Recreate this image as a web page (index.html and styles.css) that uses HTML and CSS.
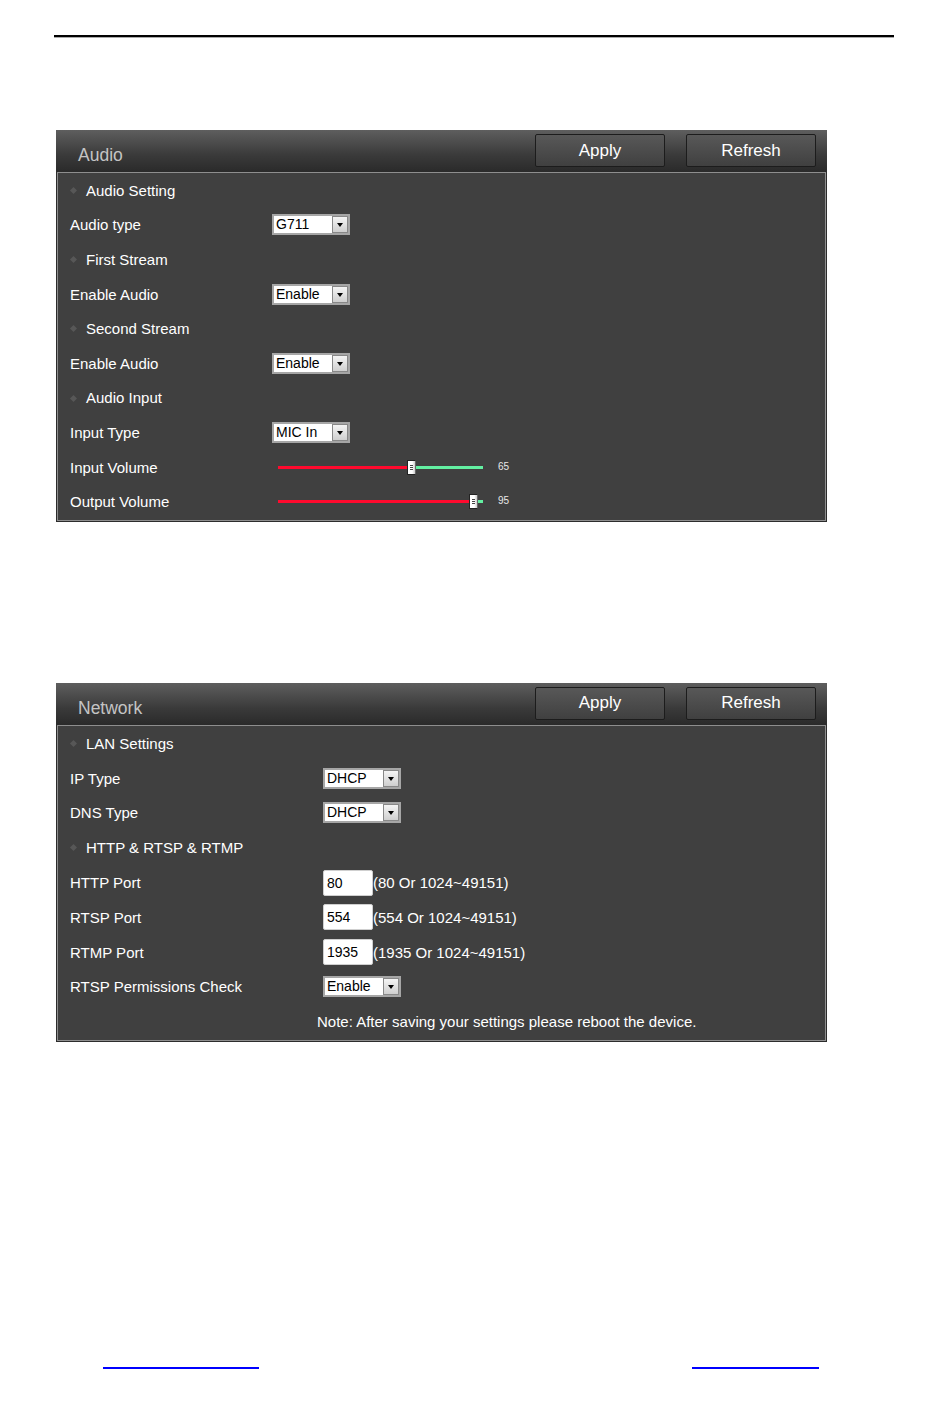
FILE: index.html
```html
<!DOCTYPE html>
<html lang="en">

<head>
    <meta charset="UTF-8">
    <title>Audio / Network Settings</title>
    <link rel="stylesheet" href="styles.css">
</head>

<body>
    <div class="page-rule"></div>

    <section class="panel audio-panel">
        <div class="panel-head">
            <span class="panel-title">Audio</span>
            <div class="panel-buttons">
                <button class="btn">Apply</button>
                <button class="btn">Refresh</button>
            </div>
        </div>
        <div class="panel-body">
            <div class="row section"><span class="dot"></span>Audio Setting</div>
            <div class="row">
                <span class="label">Audio type</span>
                <span class="select"><span class="select-text">G711</span><span class="select-arrow"></span></span>
            </div>
            <div class="row section"><span class="dot"></span>First Stream</div>
            <div class="row">
                <span class="label">Enable Audio</span>
                <span class="select"><span class="select-text">Enable</span><span class="select-arrow"></span></span>
            </div>
            <div class="row section"><span class="dot"></span>Second Stream</div>
            <div class="row">
                <span class="label">Enable Audio</span>
                <span class="select"><span class="select-text">Enable</span><span class="select-arrow"></span></span>
            </div>
            <div class="row section"><span class="dot"></span>Audio Input</div>
            <div class="row">
                <span class="label">Input Type</span>
                <span class="select"><span class="select-text">MIC In</span><span class="select-arrow"></span></span>
            </div>
            <div class="row">
                <span class="label">Input Volume</span>
                <span class="slider">
                    <span class="track">
                        <span class="track-fill" style="width: 65%;"></span>
                        <span class="thumb" style="left: 65%;"></span>
                    </span>
                    <span class="slider-value">65</span>
                </span>
            </div>
            <div class="row">
                <span class="label">Output Volume</span>
                <span class="slider">
                    <span class="track">
                        <span class="track-fill" style="width: 95%;"></span>
                        <span class="thumb" style="left: 95%;"></span>
                    </span>
                    <span class="slider-value">95</span>
                </span>
            </div>
        </div>
    </section>

    <section class="panel network-panel">
        <div class="panel-head">
            <span class="panel-title">Network</span>
            <div class="panel-buttons">
                <button class="btn">Apply</button>
                <button class="btn">Refresh</button>
            </div>
        </div>
        <div class="panel-body wide">
            <div class="row section"><span class="dot"></span>LAN Settings</div>
            <div class="row">
                <span class="label">IP Type</span>
                <span class="select"><span class="select-text">DHCP</span><span class="select-arrow"></span></span>
            </div>
            <div class="row">
                <span class="label">DNS Type</span>
                <span class="select"><span class="select-text">DHCP</span><span class="select-arrow"></span></span>
            </div>
            <div class="row section"><span class="dot"></span>HTTP &amp; RTSP &amp; RTMP</div>
            <div class="row">
                <span class="label">HTTP Port</span>
                <span class="text-input">80</span><span class="hint">(80 Or 1024~49151)</span>
            </div>
            <div class="row">
                <span class="label">RTSP Port</span>
                <span class="text-input">554</span><span class="hint">(554 Or 1024~49151)</span>
            </div>
            <div class="row">
                <span class="label">RTMP Port</span>
                <span class="text-input">1935</span><span class="hint">(1935 Or 1024~49151)</span>
            </div>
            <div class="row">
                <span class="label">RTSP Permissions Check</span>
                <span class="select"><span class="select-text">Enable</span><span class="select-arrow"></span></span>
            </div>
            <div class="row note">Note: After saving your settings please reboot the device.</div>
        </div>
    </section>

    <footer class="page-foot">
        <span class="foot-link left"></span>
        <span class="foot-link right"></span>
    </footer>
</body>

</html>
```

FILE: styles.css
```css
body {
    margin: 0;
    background-color: #fff;
    font-family: 'Liberation Sans', Arial, sans-serif;
    width: 950px;
    height: 1408px;
    overflow: hidden;
}

.page-rule {
    margin: 35px 0 0 54px;
    width: 840px;
    border-top: 2px solid #000;
    box-shadow: 0 1px 0 #aaa;
}

.panel {
    margin-left: 56px;
    width: 771px;
    box-sizing: border-box;
    background-color: #2c2c2c;
    padding: 0 1px 1px 1px;
}

.audio-panel {
    margin-top: 93px;
}

.network-panel {
    margin-top: 161px;
}

.panel-head {
    height: 42px;
    margin: 0 -1px;
    display: flex;
    justify-content: space-between;
    background: linear-gradient(#5e5e5e, #3a3a3a 60%, #2a2a2a);
}

.panel-title {
    color: #c4c4c4;
    font-size: 17.5px;
    padding: 15px 0 0 22px;
}

.panel-buttons {
    display: flex;
    gap: 21px;
    padding: 4px 11px 0 0;
}

.btn {
    width: 130px;
    height: 33px;
    background: linear-gradient(#585858, #404040);
    border: 1px solid #1c1c1c;
    border-radius: 2px;
    color: #fff;
    font-family: 'Liberation Sans', Arial, sans-serif;
    font-size: 17px;
    padding: 0;
}

.panel-body {
    background-color: #404040;
    border: 1px solid #8e8e8e;
    padding: 0 0 1px 12px;
    color: #fff;
    font-size: 15px;
}

.row {
    height: 34.6px;
    display: flex;
    align-items: center;
}

.wide .row {
    height: 34.8px;
}

.section {
    padding-left: 16px;
    position: relative;
}

.dot {
    position: absolute;
    left: 1px;
    top: 15px;
    width: 5px;
    height: 5px;
    background-color: #575757;
    transform: rotate(45deg);
}

.label {
    width: 202px;
    flex-shrink: 0;
}

.wide .label {
    width: 253px;
}

.select {
    display: flex;
    width: 78px;
    height: 21px;
    box-sizing: border-box;
    border: 2px solid #a6a6a6;
    background-color: #fff;
    color: #000;
}

.select-text {
    flex: 1;
    font-size: 14px;
    line-height: 17px;
    padding-left: 2px;
}

.select-arrow {
    width: 16px;
    box-sizing: border-box;
    border: 1px solid #888;
    background: linear-gradient(#f4f4f4, #cfcfcf);
    position: relative;
}

.select-arrow::after {
    content: '';
    position: absolute;
    left: 4px;
    top: 6px;
    border-left: 3.5px solid transparent;
    border-right: 3.5px solid transparent;
    border-top: 4px solid #000;
}

.slider {
    display: flex;
    align-items: center;
    margin-left: 6px;
}

.track {
    position: relative;
    width: 205px;
    height: 3px;
    background-color: #63f0a2;
}

.track-fill {
    position: absolute;
    left: 0;
    top: 0;
    height: 3px;
    background-color: #ff0a2e;
}

.thumb {
    position: absolute;
    top: -6px;
    width: 9px;
    height: 15px;
    margin-left: -4px;
    box-sizing: border-box;
    background: linear-gradient(90deg, #fff 60%, #ccc);
    border: 1px solid #222;
    border-right-color: #666;
    border-radius: 1px;
}

.thumb::after {
    content: '';
    position: absolute;
    left: 2px;
    top: 4px;
    width: 3px;
    height: 5px;
    background: repeating-linear-gradient(#444 0 1px, transparent 1px 2px);
}

.slider-value {
    margin-left: 15px;
    font-size: 10px;
    color: #e8e8e8;
    margin-top: -2px;
}

.text-input {
    width: 50px;
    height: 26px;
    box-sizing: border-box;
    background-color: #fff;
    border: 1px solid #cfcfcf;
    border-radius: 2px;
    color: #000;
    font-size: 14px;
    line-height: 24px;
    padding-left: 3px;
}

.hint {
    font-size: 15px;
}

.note {
    padding-left: 247px;
}

.page-foot {
    position: relative;
    margin-top: 325px;
    height: 2px;
}

.foot-link {
    position: absolute;
    top: 0;
    height: 1.5px;
    background-color: #00f;
}

.foot-link.left {
    left: 103px;
    width: 156px;
}

.foot-link.right {
    left: 692px;
    width: 127px;
}
```
